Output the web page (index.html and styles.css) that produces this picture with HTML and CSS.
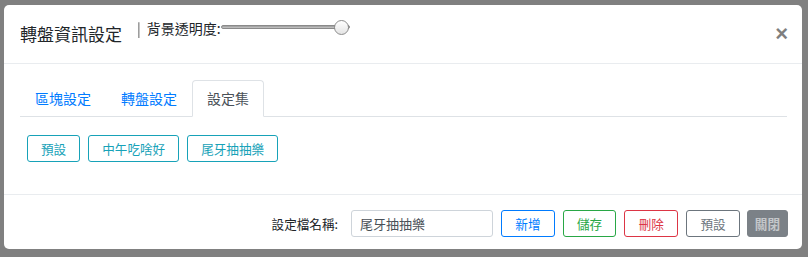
FILE: index.html
```html
<!DOCTYPE html>
<html lang="zh-Hant">

<head>
    <meta charset="UTF-8">
    <meta name="viewport" content="width=device-width, initial-scale=1.0">
    <title>轉盤資訊設定</title>
    <link rel="stylesheet" href="styles.css">
</head>

<body>
    <div class="modal">
        <div class="modal-header">
            <h5 class="modal-title">轉盤資訊設定</h5>
            <span class="opacity"><span class="divider">|</span>背景透明度:<input type="range" class="opacity-range" min="0" max="100" value="100"></span>
            <button class="close">&times;</button>
        </div>

        <div class="modal-body">
            <ul class="nav-tabs">
                <li><a href="#" class="nav-link">區塊設定</a></li>
                <li><a href="#" class="nav-link">轉盤設定</a></li>
                <li><a href="#" class="nav-link active">設定集</a></li>
            </ul>
            <div class="tab-content">
                <button class="btn btn-info">預設</button>
                <button class="btn btn-info">中午吃啥好</button>
                <button class="btn btn-info">尾牙抽抽樂</button>
            </div>
        </div>

        <div class="modal-footer">
            <label class="file-label">設定檔名稱:</label>
            <input type="text" class="file-input" value="尾牙抽抽樂">
            <button class="btn btn-primary">新增</button>
            <button class="btn btn-success">儲存</button>
            <button class="btn btn-danger">刪除</button>
            <button class="btn btn-secondary">預設</button>
            <button class="btn btn-close">關閉</button>
        </div>
    </div>
</body>

</html>
```

FILE: styles.css
```css
body {
    margin: 0;
    background-color: #808080;
    font-family: "Noto Sans CJK TC", "Liberation Sans", sans-serif;
    color: #212529;
}

.modal {
    width: 798px;
    height: 244px;
    margin: 5px 0 0 4px;
    background-color: #fff;
    border-radius: 5px;
    display: flex;
    flex-direction: column;
    overflow: hidden;
}

.modal-header {
    display: flex;
    align-items: center;
    height: 58px;
    padding: 0 15px 0 16px;
    border-bottom: 1px solid #e9ecef;
}

.modal-title {
    margin: 0;
    font-size: 17px;
    font-weight: 400;
    line-height: 28px;
}

.opacity {
    align-self: flex-start;
    margin: 13px 0 0 15px;
    font-size: 14px;
    line-height: 20px;
    display: flex;
    align-items: center;
}

.divider {
    color: #555;
    margin-right: 6px;
    will-change: transform;
}

.opacity-range {
    -webkit-appearance: none;
    appearance: none;
    width: 129px;
    height: 16px;
    margin: 0 0 2px 0;
    padding: 0;
    background: transparent;
}

.opacity-range::-webkit-slider-runnable-track {
    height: 4px;
    background: linear-gradient(#9a9a9a, #c8c8c8);
    border: 1px solid #8a8a8a;
    border-radius: 3px;
}

.opacity-range::-webkit-slider-thumb {
    -webkit-appearance: none;
    width: 15px;
    height: 15px;
    margin-top: -6px;
    border-radius: 50%;
    border: 1px solid #8c8c8c;
    background: linear-gradient(#ffffff, #e4e4e4);
}

.close {
    margin-left: auto;
    margin-right: -1px;
    padding: 0;
    border: none;
    background: none;
    font-family: "Liberation Sans", sans-serif;
    font-size: 22px;
    font-weight: 700;
    line-height: 22px;
    color: #000;
    opacity: 0.5;
}

.modal-body {
    flex: 1;
    padding: 16px 15px 0 16px;
    border-bottom: 1px solid #e9ecef;
}

.nav-tabs {
    display: flex;
    list-style: none;
    margin: 0;
    padding: 0;
    border-bottom: 1px solid #dee2e6;
}

.nav-link {
    display: block;
    margin-bottom: -1px;
    padding: 7px 14px;
    font-size: 14px;
    line-height: 21px;
    color: #007bff;
    text-decoration: none;
    border: 1px solid transparent;
    border-radius: 4px 4px 0 0;
}

.nav-link.active {
    color: #495057;
    background-color: #fff;
    border-color: #dee2e6 #dee2e6 #fff;
}

.tab-content {
    display: flex;
    gap: 8px;
    padding: 18px 7px 0;
}

.btn {
    padding: 4px 13px;
    font-family: inherit;
    font-size: 12.6px;
    line-height: 17px;
    background-color: #fff;
    border: 1px solid;
    border-radius: 3px;
}

.btn-info {
    color: #17a2b8;
    border-color: #17a2b8;
}

.btn-primary {
    color: #007bff;
    border-color: #007bff;
}

.btn-success {
    color: #28a745;
    border-color: #28a745;
}

.btn-danger {
    color: #dc3545;
    border-color: #dc3545;
}

.btn-secondary {
    color: #6c757d;
    border-color: #6c757d;
}

.modal-footer .btn {
    padding: 4px 13.25px;
}

.modal-footer .btn-close {
    margin-left: -1px;
    padding: 4px 7px;
    color: #c4c7ca;
    background-color: #7b8187;
    border-color: #7b8187;
    font-weight: 700;
}

.modal-footer {
    display: flex;
    align-items: center;
    justify-content: flex-end;
    gap: 8px;
    height: 54px;
    padding: 2px 14px 0 16px;
    box-sizing: border-box;
}

.file-label {
    font-size: 12.6px;
    margin-right: 5px;
}

.file-input {
    width: 142px;
    height: 27px;
    box-sizing: border-box;
    padding: 0 8px;
    font-family: inherit;
    font-size: 13px;
    color: #495057;
    border: 1px solid #ced4da;
    border-radius: 3px;
}
```
